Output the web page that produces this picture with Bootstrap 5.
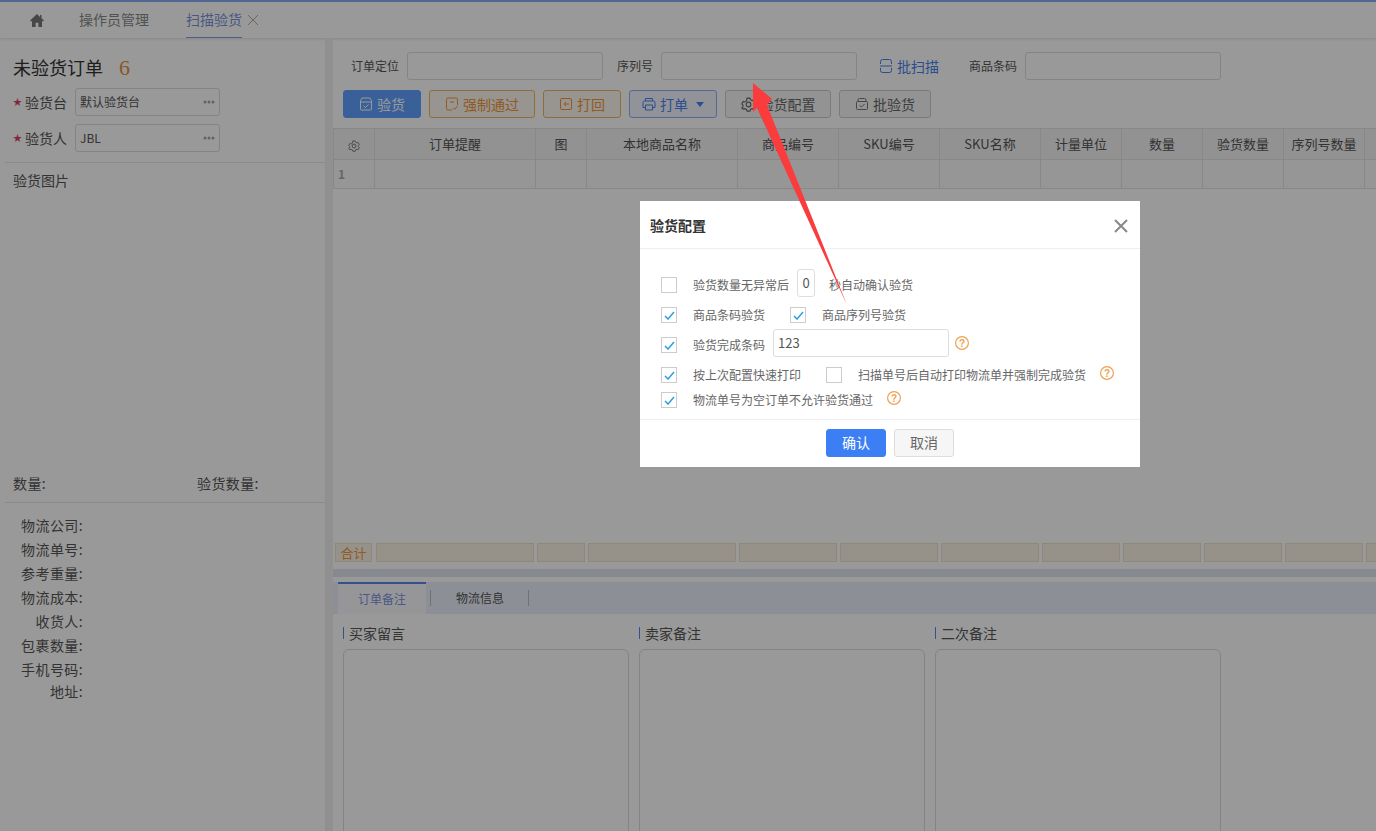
<!DOCTYPE html>
<html lang="zh-CN">
<head>
  <meta charset="UTF-8" />
  <title>扫描验货</title>
  <link href="https://cdn.jsdelivr.net/npm/bootstrap@5.3.0/dist/css/bootstrap.min.css" rel="stylesheet" />
  <style>
    html, body { height: 831px; overflow: hidden; }
    body { background: #fff; color: #555; font-family: "Noto Sans CJK SC", "Liberation Sans", sans-serif; font-size: 14px; }
    /* top tabs */
    .top-bar { height: 38px; border-top: 2px solid #86a8f0; box-shadow: 0 1px 3px rgba(0,0,0,.12); padding-left: 30px; }
    .tab-link { color: #888; font-size: 14px; line-height: 33px; height: 35px; }
    .tab-first { margin-left: 35px; }
    .tab-on { color: #7b93dd; border-bottom: 1px solid #7f9fe8; margin-left: 37px; margin-right: 4px; }
    .page-body { height: 793px; }
    /* left panel */
    .side-panel { width: 333px; flex: none; border-right: 8px solid #f0f0f0; padding: 14px 0 0 5px; }
    .side-title { font-size: 18px; color: #333; padding-left: 8px; line-height: 30px; height: 31px; }
    .side-count { font-family: "Liberation Serif", serif; color: #e8913c; font-size: 22px; margin-left: 16px; }
    .field-row { height: 28px; margin-bottom: 8px; padding-left: 8px; }
    .field-top { margin-top: 5px; }
    .req-star { color: #d9435a; font-size: 9px; width: 12px; }
    .field-name { width: 42px; font-size: 14px; margin-right: 8px; white-space: nowrap; line-height: 34px; }
    .pick-box { width: 145px; height: 28px; border: 1px solid #ddd; border-radius: 3px; padding: 0 4px; font-size: 12px; color: #555; }
    .side-rule { border-top: 1px solid #e6e6e6; width: 320px; }
    .side-rule-top { margin-top: 10px; }
    .side-label { padding-left: 8px; }
    .pic-label { margin-top: 7px; height: 303px; }
    .count-row { height: 29px; letter-spacing: .4px; }
    .count-first { width: 184px; }
    .ship-list { margin-top: 10px; }
    .ship-row { height: 24px; line-height: 24px; letter-spacing: .4px; }
    .ship-row span { display: block; width: 78px; text-align: right; }
    .ship-last { margin-top: -2px; }
    /* search and buttons */
    .main-panel { flex: 1; min-width: 0; }
    .search-row { height: 28px; margin-top: 14px; font-size: 12px; }
    .search-input { width: 196px; height: 28px; border: 1px solid #ddd; border-radius: 3px; }
    .lbl-a { margin-left: 18px; margin-right: 8px; }
    .lbl-b { margin-left: 14px; margin-right: 8px; }
    .lbl-c { margin-left: 30px; margin-right: 8px; }
    .scan-link { color: #4a7ff0; font-size: 14px; margin-left: 23px; gap: 5px; }
    .tool-row { margin: 10px 0 10px 10px; gap: 8px; }
    .tool-btn { height: 28px; border: 1px solid #ccc; border-radius: 3px; font-size: 14px; padding: 0; color: #666; background: #f6f6f6; gap: 4px; }
    .tool-main { background: #62a0ff; border-color: #62a0ff; color: #fff; width: 78px; }
    .tool-warn { background: #fdf8f0; border-color: #f3b25d; color: #f0963a; }
    .tool-blue { background: #f2f6fe; border-color: #8fb2f5; color: #4a7ff0; width: 88px; }
    .w-force { width: 106px; }
    .w-back { width: 78px; }
    .w-conf { width: 106px; }
    .w-batch { width: 92px; }
    .caret-gap { margin-left: 4px; }
    /* grid */
    .grid-table { table-layout: fixed; width: 1043px; margin: 0; border-color: #e3e3e3; font-size: 13px; --bs-table-color: #555; }
    .grid-table th { font-weight: 400; text-align: center; height: 31px; padding: 0; vertical-align: middle; background: #f3f3f3; white-space: nowrap; }
    .grid-table td { height: 29px; padding: 0 0 0 4px; vertical-align: middle; background: #fafafa; color: #aaa; font-weight: 700; font-size: 12px; }
    .c41 { width: 41px; } .c161 { width: 161px; } .c51 { width: 51px; } .c151 { width: 151px; } .c101 { width: 101px; } .c81 { width: 81px; }
    .grid-space { height: 354px; }
    .sum-row { height: 19px; gap: 3px; padding-left: 2px; }
    .sum-cell { height: 19px; background: #fbf4e6; border: 1px solid #efe2c8; color: #f0963a; font-size: 13px; line-height: 17px; text-align: center; flex: none; }
    .sum-first { margin-right: 1px; }
    .w37 { width: 37px; } .w158 { width: 158px; } .w48 { width: 48px; } .w148 { width: 148px; } .w98 { width: 98px; } .w78 { width: 78px; } .w12 { width: 12px; }
    .split-bar { height: 8px; margin-top: 7px; background: #dfe6f0; }
    /* notes */
    .note-tabs { height: 32px; margin-top: 5px; background: #e9eff8; padding-left: 5px; }
    .note-tab { width: 88px; height: 32px; line-height: 30px; text-align: center; color: #7b93dd; background: #fafbfd; border-top: 2px solid #5b85e8; font-size: 12px; }
    .note-sep { width: 1px; height: 16px; background: #b9bcc2; }
    .note-name { color: #555; font-size: 12px; margin-left: 25px; margin-right: 24px; }
    .notes-row { padding: 12px 0 0 10px; gap: 10px; }
    .note-col { width: 286px; }
    .note-head { font-size: 14px; line-height: 12px; border-left: 1px solid #5b85e8; padding-left: 5px; margin: 1px 0 10px; height: 12px; }
    .note-box { height: 300px; border: 1px solid #ddd; border-radius: 6px; }
    /* dialog */
    .dim-layer { position: fixed; inset: 0; background: rgba(0,0,0,.4); }
    .cfg-box { position: absolute; left: 640px; top: 201px; width: 500px; height: 266px; background: #fff; border: 0; border-radius: 0; font-size: 12px; color: #666; }
    .cfg-head { height: 48px; padding: 2px 12px 0 10px; border-bottom: 1px solid #eceef3; border-radius: 0; flex: none; }
    .cfg-title { font-size: 14px; font-weight: 700; color: #333; }
    .cfg-body { padding: 22px 0 0 21px; height: 170px; flex: none; }
    .cfg-line { line-height: 16px; white-space: nowrap; height: 16px; margin-top: 8px; }
    .cfg-tall { height: 28px; }
    .cfg-first { margin-top: 0; }
    .cfg-last { margin-top: 9px; }
    .cfg-check { width: 16px; height: 16px; border: 1px solid #ccc; margin-right: 16px; flex: none; display: flex; align-items: center; justify-content: center; }
    .cfg-second { margin-left: 25px; }
    .cfg-num { width: 18px; height: 28px; border: 1px solid #ddd; border-radius: 3px; text-align: center; line-height: 26px; color: #555; font-size: 13px; margin: 0 14px 4px 8px; }
    .cfg-text { width: 176px; height: 28px; border: 1px solid #ddd; border-radius: 3px; padding-left: 4px; line-height: 26px; color: #555; font-size: 13px; margin: 0 6px 4px 8px; }
    .cfg-help { margin-bottom: 4px; flex: none; }
    .help-gap { margin-left: 14px; }
    .cfg-foot { height: 48px; border-top: 1px solid #eceef3; gap: 8px; padding: 0 0 2px; border-radius: 0; flex: none; }
    .cfg-ok, .cfg-no { width: 60px; height: 28px; padding: 0; font-size: 14px; border-radius: 3px; margin: 0; }
    .cfg-ok { background: #3c7ff5; border: 1px solid #3c7ff5; color: #fff; }
    .cfg-no { background: #f6f6f6; border: 1px solid #ddd; color: #666; }
    .arrow-mark { position: fixed; left: 0; top: 0; pointer-events: none; }
    .help-mark { font-family: "Liberation Sans", sans-serif; font-size: 10px; font-weight: 700; }
  </style>
</head>
<body>
  <svg width="0" height="0" class="d-block">
    <defs>
      <symbol id="gear" viewBox="0 0 16 16"><path fill="none" stroke="currentColor" stroke-width="1.200" d="M6.500 1.200h3l.6 1.700 1.700.9 1.700-.5 1.500 2.600-1.200 1.300v1.800l1.200 1.300-1.500 2.600-1.700-.5-1.700.9-.6 1.700h-3l-.6-1.700-1.700-.9-1.700.5L.9 11.800l1.200-1.300V8.700L.9 7.400l1.500-2.600 1.700.5 1.700-.9z"/><circle cx="8" cy="8" r="2.500" fill="none" stroke="currentColor" stroke-width="1.200"/></symbol>
      <symbol id="tick" viewBox="0 0 11 9"><path fill="none" stroke="#2a9fe0" stroke-width="1.500" d="M1 5l3 3 6-7"/></symbol>
      <symbol id="help" viewBox="0 0 14 14"><circle cx="7" cy="7" r="6.400" fill="none" stroke="#f0a050" stroke-width="1.200"/><text class="help-mark" x="7" y="10.600" text-anchor="middle" fill="#f0a050">?</text></symbol>
      <symbol id="dots" viewBox="0 0 12 4"><circle cx="2" cy="2" r="1.500" fill="#9aa7b0"/><circle cx="6" cy="2" r="1.500" fill="#9aa7b0"/><circle cx="10" cy="2" r="1.500" fill="#9aa7b0"/></symbol>
    </defs>
  </svg>
  <div class="top-bar d-flex align-items-center">
    <svg width="14" height="13" viewBox="0 0 14 13"><path fill="#777" d="M7 0 0 6.500 1 7.500 2 6.700V13H5.600V8.800H8.400V13H12V6.700L13 7.500 14 6.500 11.500 4.200V1H10V2.900Z"/></svg>
    <div class="tab-link tab-first">操作员管理</div>
    <div class="tab-link tab-on">扫描验货</div>
    <svg width="14" height="14" viewBox="0 0 14 14"><path stroke="#aaa" fill="none" d="M2 2l10 10M12 2 2 12"/></svg>
  </div>
  <div class="page-body d-flex">
    <div class="side-panel">
      <div class="side-title">未验货订单<span class="side-count">6</span></div>
      <div class="field-row field-top d-flex align-items-center">
        <span class="req-star">★</span><span class="field-name">验货台</span>
        <div class="pick-box d-flex align-items-center justify-content-between"><span>默认验货台</span><svg width="12" height="4"><use href="#dots"/></svg></div>
      </div>
      <div class="field-row d-flex align-items-center">
        <span class="req-star">★</span><span class="field-name">验货人</span>
        <div class="pick-box d-flex align-items-center justify-content-between"><span>JBL</span><svg width="12" height="4"><use href="#dots"/></svg></div>
      </div>
      <div class="side-rule side-rule-top"></div>
      <div class="side-label pic-label">验货图片</div>
      <div class="side-label count-row d-flex"><span class="count-first">数量:</span><span>验货数量:</span></div>
      <div class="side-rule"></div>
      <div class="ship-list">
        <div class="ship-row"><span>物流公司:</span></div>
        <div class="ship-row"><span>物流单号:</span></div>
        <div class="ship-row"><span>参考重量:</span></div>
        <div class="ship-row"><span>物流成本:</span></div>
        <div class="ship-row"><span>收货人:</span></div>
        <div class="ship-row"><span>包裹数量:</span></div>
        <div class="ship-row"><span>手机号码:</span></div>
        <div class="ship-row ship-last"><span>地址:</span></div>
      </div>
    </div>
    <div class="main-panel">
      <div class="search-row d-flex align-items-center">
        <span class="lbl-a">订单定位</span><div class="search-input"></div>
        <span class="lbl-b">序列号</span><div class="search-input"></div>
        <span class="scan-link d-flex align-items-center">
          <svg width="12" height="14" viewBox="0 0 12 14"><path fill="none" stroke="#4a7ff0" d="M.5 5V2.500a2 2 0 0 1 2-2h7a2 2 0 0 1 2 2V5M.5 9v2.500a2 2 0 0 0 2 2h7a2 2 0 0 0 2-2V9M0 7h12"/></svg>批扫描</span>
        <span class="lbl-c">商品条码</span><div class="search-input"></div>
      </div>
      <div class="tool-row d-flex">
        <button class="btn tool-btn tool-main d-flex align-items-center justify-content-center"><svg width="14" height="14" viewBox="0 0 14 14"><path fill="none" stroke="#fff" d="M3 1h8l1.500 2.500v8.500a1 1 0 0 1-1 1h-9a1 1 0 0 1-1-1V3.500zM1.500 5h11M4.500 9l2 1.500 3-3"/></svg>验货</button>
        <button class="btn tool-btn tool-warn w-force d-flex align-items-center justify-content-center"><svg width="14" height="14" viewBox="0 0 14 14"><path fill="none" stroke="#f0963a" d="M7 13H3a1.500 1.500 0 0 1-1.500-1.500v-9A1.500 1.500 0 0 1 3 1h8a1.500 1.500 0 0 1 1.500 1.500V8M5 5h4M8 11l1.500 1.500 3-3.500"/></svg>强制通过</button>
        <button class="btn tool-btn tool-warn w-back d-flex align-items-center justify-content-center"><svg width="14" height="14" viewBox="0 0 14 14"><path fill="none" stroke="#f0963a" d="M3 1.500h8a1.500 1.500 0 0 1 1.500 1.500v8a1.500 1.500 0 0 1-1.500 1.500H3A1.500 1.500 0 0 1 1.500 11V3A1.500 1.500 0 0 1 3 1.500zM10 7H5M7 5 5 7l2 2"/></svg>打回</button>
        <button class="btn tool-btn tool-blue d-flex align-items-center justify-content-center"><svg width="14" height="14" viewBox="0 0 14 14"><path fill="none" stroke="#4a7ff0" d="M3.500 4V1.500h7V4M2.500 4h9a1.500 1.500 0 0 1 1.500 1.500v5h-2.500M3.500 10.500H1v-5A1.500 1.500 0 0 1 2.500 4M3.500 8h7v5h-7z"/></svg>打单<svg class="caret-gap" width="8" height="5" viewBox="0 0 8 5"><path fill="#4a7ff0" d="M0 0h8L4 5z"/></svg></button>
        <button class="btn tool-btn w-conf d-flex align-items-center justify-content-center"><svg width="15" height="15"><use href="#gear"/></svg>验货配置</button>
        <button class="btn tool-btn w-batch d-flex align-items-center justify-content-center"><svg width="14" height="14" viewBox="0 0 14 14"><path fill="none" stroke="#777" d="M2.500 4.500h9a1 1 0 0 1 1 1v6a1 1 0 0 1-1 1h-9a1 1 0 0 1-1-1v-6a1 1 0 0 1 1-1zM3 4.500V3a1.500 1.500 0 0 1 1.500-1.500h5A1.500 1.500 0 0 1 11 3v1.500M4.500 8.500l2 1.500 3-3"/></svg>批验货</button>
      </div>
      <table class="table table-bordered grid-table">
        <colgroup><col class="c41"><col class="c161"><col class="c51"><col class="c151"><col class="c101"><col class="c101"><col class="c101"><col class="c81"><col class="c81"><col class="c81"><col class="c81"><col class="w12"></colgroup>
        <thead><tr><th class="text-secondary"><svg width="12" height="12"><use href="#gear"/></svg></th><th>订单提醒</th><th>图</th><th>本地商品名称</th><th>商品编号</th><th>SKU编号</th><th>SKU名称</th><th>计量单位</th><th>数量</th><th>验货数量</th><th>序列号数量</th><th></th></tr></thead>
        <tbody><tr><td>1</td><td></td><td></td><td></td><td></td><td></td><td></td><td></td><td></td><td></td><td></td><td></td></tr></tbody>
      </table>
      <div class="grid-space"></div>
      <div class="sum-row d-flex">
        <div class="sum-cell sum-first w37">合计</div><div class="sum-cell w158"></div><div class="sum-cell w48"></div><div class="sum-cell w148"></div><div class="sum-cell w98"></div><div class="sum-cell w98"></div><div class="sum-cell w98"></div><div class="sum-cell w78"></div><div class="sum-cell w78"></div><div class="sum-cell w78"></div><div class="sum-cell w78"></div><div class="sum-cell w12"></div>
      </div>
      <div class="split-bar"></div>
      <div class="note-tabs d-flex align-items-center">
        <div class="note-tab">订单备注</div>
        <div class="note-sep ms-1"></div>
        <div class="note-name">物流信息</div>
        <div class="note-sep"></div>
      </div>
      <div class="notes-row d-flex">
        <div class="note-col"><div class="note-head">买家留言</div><div class="note-box"></div></div>
        <div class="note-col"><div class="note-head">卖家备注</div><div class="note-box"></div></div>
        <div class="note-col"><div class="note-head">二次备注</div><div class="note-box"></div></div>
      </div>
    </div>
  </div>

  <div class="dim-layer"></div>
  <div class="modal-content cfg-box">
    <div class="modal-header cfg-head">
      <span class="cfg-title">验货配置</span>
      <svg width="14" height="14" viewBox="0 0 14 14"><path stroke="#888" stroke-width="2" fill="none" d="M1 1l12 12M13 1 1 13"/></svg>
    </div>
    <div class="modal-body cfg-body">
      <div class="cfg-line cfg-tall cfg-first d-flex align-items-center">
        <span class="cfg-check"></span><span>验货数量无异常后</span><span class="cfg-num">0</span><span>秒自动确认验货</span>
      </div>
      <div class="cfg-line d-flex align-items-center">
        <span class="cfg-check"><svg width="11" height="9"><use href="#tick"/></svg></span><span>商品条码验货</span>
        <span class="cfg-check cfg-second"><svg width="11" height="9"><use href="#tick"/></svg></span><span>商品序列号验货</span>
      </div>
      <div class="cfg-line cfg-tall d-flex align-items-center">
        <span class="cfg-check"><svg width="11" height="9"><use href="#tick"/></svg></span><span>验货完成条码</span><span class="cfg-text">123</span>
        <svg class="cfg-help" width="14" height="14"><use href="#help"/></svg>
      </div>
      <div class="cfg-line d-flex align-items-center">
        <span class="cfg-check"><svg width="11" height="9"><use href="#tick"/></svg></span><span>按上次配置快速打印</span>
        <span class="cfg-check cfg-second"></span><span>扫描单号后自动打印物流单并强制完成验货</span>
        <svg class="cfg-help help-gap" width="14" height="14"><use href="#help"/></svg>
      </div>
      <div class="cfg-line cfg-last d-flex align-items-center">
        <span class="cfg-check"><svg width="11" height="9"><use href="#tick"/></svg></span><span>物流单号为空订单不允许验货通过</span>
        <svg class="cfg-help help-gap" width="14" height="14"><use href="#help"/></svg>
      </div>
    </div>
    <div class="modal-footer cfg-foot justify-content-center">
      <button class="btn cfg-ok">确认</button>
      <button class="btn cfg-no">取消</button>
    </div>
  </div>
  <svg class="arrow-mark" width="1376" height="831"><polygon fill="#fb3c3c" points="753,83 772,99 767,105 847,305 757,108 753,112"/></svg>
</body>
</html>
